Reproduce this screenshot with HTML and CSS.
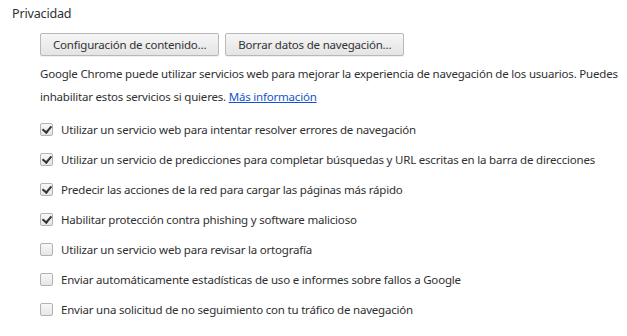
FILE: index.html
```html
<!DOCTYPE html>
<html lang="es">
<head>
<meta charset="utf-8">
<link rel="stylesheet" href="styles.css">
</head>
<body>
<section class="section">
  <h3 class="title">Privacidad</h3>
  <div class="content">
    <div class="buttons">
      <button class="btn">Configuración de contenido...</button>
      <button class="btn">Borrar datos de navegación...</button>
    </div>
    <p class="desc">Google Chrome puede utilizar servicios web para mejorar la experiencia de navegación de los usuarios. Puedes inhabilitar estos servicios si quieres. <a href="#" class="link">Más información</a></p>
    <ul class="opts">
      <li class="opt"><span class="cb on"></span>Utilizar un servicio web para intentar resolver errores de navegación</li>
      <li class="opt"><span class="cb on"></span>Utilizar un servicio de predicciones para completar búsquedas y URL escritas en la barra de direcciones</li>
      <li class="opt"><span class="cb on"></span>Predecir las acciones de la red para cargar las páginas más rápido</li>
      <li class="opt"><span class="cb on"></span>Habilitar protección contra phishing y software malicioso</li>
      <li class="opt"><span class="cb"></span>Utilizar un servicio web para revisar la ortografía</li>
      <li class="opt"><span class="cb"></span>Enviar automáticamente estadísticas de uso e informes sobre fallos a Google</li>
      <li class="opt"><span class="cb"></span>Enviar una solicitud de no seguimiento con tu tráfico de navegación</li>
    </ul>
  </div>
</section>
</body>
</html>
```
FILE: styles.css
```css
html, body { margin: 0; padding: 0; background: #fff; }
body {
  font-family: "Noto Sans", "Open Sans", sans-serif;
  font-size: 11.5px;
  letter-spacing: -0.2px;
  color: #303030;
}
.section { padding: 5px 0 0 12px; }
.title {
  margin: 0;
  font-weight: normal;
  font-size: 12.6px;
  line-height: 18px;
  color: #303030;
}
.content { padding-left: 28px; }
.buttons { display: flex; gap: 6px; margin-top: 10px; }
.btn {
  font-family: inherit;
  font-size: 11.5px;
  letter-spacing: -0.2px;
  color: #333;
  height: 23px;
  padding: 0 12px;
  border: 1px solid #b8b8b8;
  border-radius: 2px;
  background: linear-gradient(#f6f6f6, #e4e4e4);
  box-shadow: 0 1px 0 rgba(0,0,0,0.06);
}
.desc { margin: 6px 0 0; line-height: 23px; padding-right: 4px; }
.link { color: #1155cc; text-decoration: underline; }
.opts { list-style: none; margin: 6px 0 0; padding: 0; }
.opt { display: flex; align-items: center; height: 30px; white-space: nowrap; }
.cb {
  box-sizing: border-box;
  width: 13px; height: 13px;
  border: 1px solid #b2b2b2;
  border-radius: 2px;
  background: linear-gradient(#f8f8f8, #e6e6e6);
  margin-right: 8px;
  position: relative;
  flex: none;
}
.cb.on::after {
  content: "";
  position: absolute;
  left: 3px; top: 0px;
  width: 4px; height: 7px;
  border: solid #333;
  border-width: 0 2px 2px 0;
  transform: rotate(40deg);
}
```
